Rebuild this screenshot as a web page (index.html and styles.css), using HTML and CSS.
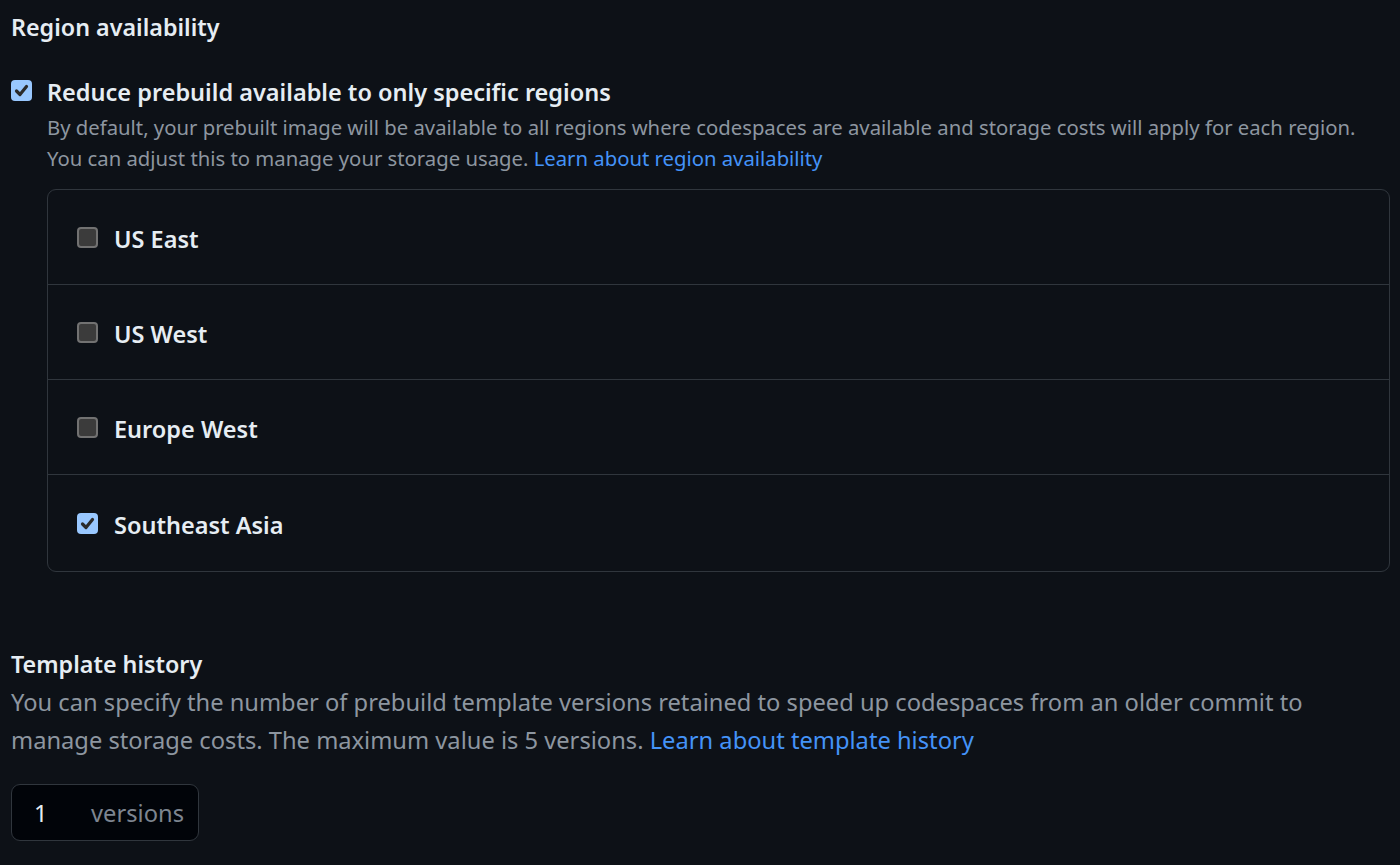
FILE: index.html
```html
<!DOCTYPE html>
<html lang="en">
<head>
    <meta charset="UTF-8">
    <meta name="viewport" content="width=device-width, initial-scale=1.0">
    <title>Prebuild configuration</title>
    <link rel="stylesheet" href="styles.css">
</head>
<body>
    <div class="container">
        <h2 class="section-title">Region availability</h2>

        <div class="option">
            <span class="checkbox checked">
                <svg viewBox="0 0 21 21" width="21" height="21"><polyline points="5.5,11 9,14.5 15.5,6.5" /></svg>
            </span>
            <div class="option-body">
                <div class="option-label">Reduce prebuild available to only specific regions</div>
                <p class="note">By default, your prebuilt image will be available to all regions where codespaces are available and storage costs will apply for each region.<br>You can adjust this to manage your storage usage. <a href="#">Learn about region availability</a></p>

                <ul class="region-list">
                    <li class="region">
                        <span class="checkbox"></span>
                        <span class="region-name">US East</span>
                    </li>
                    <li class="region">
                        <span class="checkbox"></span>
                        <span class="region-name">US West</span>
                    </li>
                    <li class="region">
                        <span class="checkbox"></span>
                        <span class="region-name">Europe West</span>
                    </li>
                    <li class="region">
                        <span class="checkbox checked">
                            <svg viewBox="0 0 21 21" width="21" height="21"><polyline points="5.5,11 9,14.5 15.5,6.5" /></svg>
                        </span>
                        <span class="region-name">Southeast Asia</span>
                    </li>
                </ul>
            </div>
        </div>

        <h2 class="section-title history-title">Template history</h2>
        <p class="lead">You can specify the number of prebuild template versions retained to speed up codespaces from an older commit to<br>manage storage costs. The maximum value is 5 versions. <a href="#">Learn about template history</a></p>

        <div class="versions-input">
            <span class="versions-value">1</span>
            <span class="versions-unit">versions</span>
        </div>
    </div>
</body>
</html>
```

FILE: styles.css
```css
html, body {
    margin: 0;
    padding: 0;
    background-color: #0d1117;
}

body {
    font-family: "Noto Sans", "Open Sans", sans-serif;
    color: #e6edf3;
    height: 865px;
    overflow: hidden;
}

a {
    color: #4493f8;
    text-decoration: none;
}

.container {
    padding: 9px 10px 0 11px;
}

.section-title {
    margin: 0;
    font-size: 23.3px;
    line-height: 36px;
    font-weight: 600;
}

.option {
    display: flex;
    gap: 15px;
    margin-top: 29px;
}

.option > .checkbox {
    margin-top: 6px;
}

.option-body {
    flex: 1;
}

.option-label {
    font-size: 23.5px;
    line-height: 36px;
    font-weight: 600;
}

.note {
    margin: 2px 0 0;
    font-size: 20.3px;
    line-height: 31px;
    color: #8d96a0;
    white-space: nowrap;
}

/* checkboxes look like the native dark ones */
.checkbox {
    display: inline-flex;
    flex: none;
    box-sizing: border-box;
    width: 21px;
    height: 21px;
    border: 2px solid #727272;
    border-radius: 4px;
    background-color: #3b3b3b;
}

.checkbox.checked {
    border: none;
    background-color: #99c8ff;
}

.checkbox svg polyline {
    fill: none;
    stroke: #2b2b2b;
    stroke-width: 3.2;
    stroke-linecap: round;
    stroke-linejoin: round;
}

.region-list {
    list-style: none;
    margin: 15px 0 0;
    padding: 0;
    border: 1px solid #30363d;
    border-radius: 9px;
}

.region {
    display: flex;
    align-items: center;
    gap: 16px;
    height: 94px;
    padding: 0 29px;
    border-top: 1px solid #30363d;
}

.region:first-child {
    border-top: none;
}

.region:last-child {
    height: 96px;
}

.region-name {
    font-size: 23.5px;
    font-weight: 600;
    line-height: 36px;
    margin-top: 4px;
}

.history-title {
    margin-top: 74px;
}

.lead {
    margin: 1px 0 0;
    font-size: 23.7px;
    line-height: 38px;
    color: #8d96a0;
}

.versions-input {
    display: inline-flex;
    align-items: center;
    box-sizing: border-box;
    width: 188px;
    height: 57px;
    margin-top: 25px;
    padding: 0 14px 0 22px;
    border: 1px solid #30363d;
    border-radius: 9px;
    background-color: #010409;
    font-size: 23.7px;
}

.versions-value {
    flex: 1;
    color: #e6edf3;
}

.versions-unit {
    color: #7d8590;
}
```
